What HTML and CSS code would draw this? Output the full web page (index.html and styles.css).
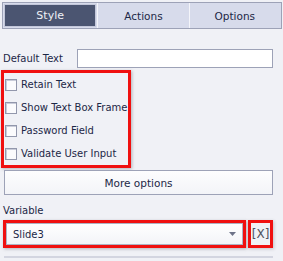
FILE: index.html
```html
<!DOCTYPE html>
<html>
<head>
<meta charset="utf-8">
<link rel="stylesheet" href="styles.css">
</head>
<body>
<div class="panel">
  <div class="tabs">
    <div class="tab active">Style</div>
    <div class="tab">Actions</div>
    <div class="tab">Options</div>
  </div>
  <div class="content">
    <div class="field-row">
      <span class="field-label">Default Text</span>
      <span class="text-input"></span>
    </div>
    <div class="mark checks">
      <div class="check-row"><span class="checkbox"></span><span>Retain Text</span></div>
      <div class="check-row"><span class="checkbox"></span><span>Show Text Box Frame</span></div>
      <div class="check-row"><span class="checkbox"></span><span>Password Field</span></div>
      <div class="check-row"><span class="checkbox"></span><span>Validate User Input</span></div>
    </div>
    <div class="button">More options</div>
    <div class="section-label">Variable</div>
    <div class="var-row">
      <div class="mark select-wrap">
        <div class="select">
          <span>Slide3</span>
          <svg class="arrow" width="7" height="4" viewBox="0 0 7 4"><path d="M0 0H7L3.5 4Z" fill="#6d7388"/></svg>
        </div>
      </div>
      <div class="mark clear">[X]</div>
    </div>
    <div class="divider"></div>
  </div>
</div>
</body>
</html>
```
FILE: styles.css
```css
html, body {
  margin: 0;
  padding: 0;
}
body {
  background: #f0f1f6;
  font-family: "DejaVu Sans", Verdana, sans-serif;
  font-size: 10px;
  color: #1c2746;
  width: 283px;
  height: 261px;
  overflow: hidden;
}
.panel {
  padding-top: 2px;
}
.tabs {
  display: flex;
  margin: 0 1px 0 2px;
  height: 25px;
  border: 1px solid #9da2b7;
  background: #d7dbeb;
  padding: 0 1px;
  align-items: stretch;
}
.tab {
  flex: 1;
  display: flex;
  align-items: center;
  justify-content: center;
  border-left: 1px solid #f4f5fa;
  font-size: 10.5px;
  color: #1c2746;
}
.tab:first-child {
  border-left: none;
}
.tab.active {
  background: #4b5571;
  color: #eef0f6;
  border: 1px solid #c3c7da;
  margin: 1px 1px 1px 0;
  font-size: 11px;
}
.content {
  padding: 0 10px 0 3px;
}
.field-row {
  display: flex;
  align-items: center;
  margin-top: 20px;
  height: 19px;
}
.field-label {
  width: 74px;
  flex: none;
}
.text-input {
  flex: 1;
  height: 17px;
  background: #ffffff;
  border: 1px solid #9da2b7;
}
.mark {
  border: 3px solid #f01010;
  box-shadow: 1px 1px 3px rgba(60, 60, 70, 0.35);
}
.checks {
  width: 124px;
  margin: 2px 0 0 -2px;
}
.check-row {
  display: flex;
  align-items: center;
  height: 23px;
  gap: 4px;
  padding-left: 1px;
}
.checkbox {
  width: 10px;
  height: 10px;
  border: 1px solid #9297ac;
  background: #fbfbfd;
  box-shadow: inset 1px 1px 0 #c9ccd9;
  flex: none;
}
.button {
  margin: 2px 0 0 1px;
  height: 23px;
  border: 1px solid #9da2b7;
  background: linear-gradient(#fdfdfe, #f3f4f8);
  display: flex;
  align-items: center;
  justify-content: center;
  font-size: 10.5px;
}
.section-label {
  margin-top: 9px;
  height: 14px;
  line-height: 14px;
}
.var-row {
  display: flex;
  margin-top: 2px;
  gap: 2px;
}
.select-wrap {
  width: 238px;
  height: 22px;
}
.select {
  height: 20px;
  border: 1px solid #aeb2c3;
  background: linear-gradient(#ffffff, #f3f4f8);
  display: flex;
  align-items: center;
  justify-content: space-between;
  padding: 0 6px 0 6px;
}
.arrow {
  display: block;
}
.clear {
  width: 19px;
  height: 22px;
  display: flex;
  align-items: center;
  justify-content: center;
  font-family: "DejaVu Sans", sans-serif;
  font-size: 12px;
  color: #4f535f;
  box-shadow: 1px 1px 3px rgba(60, 60, 70, 0.25);
}
.divider {
  margin: 8px 0 0 1px;
  height: 2px;
  background: #d3d5e0;
}
```
